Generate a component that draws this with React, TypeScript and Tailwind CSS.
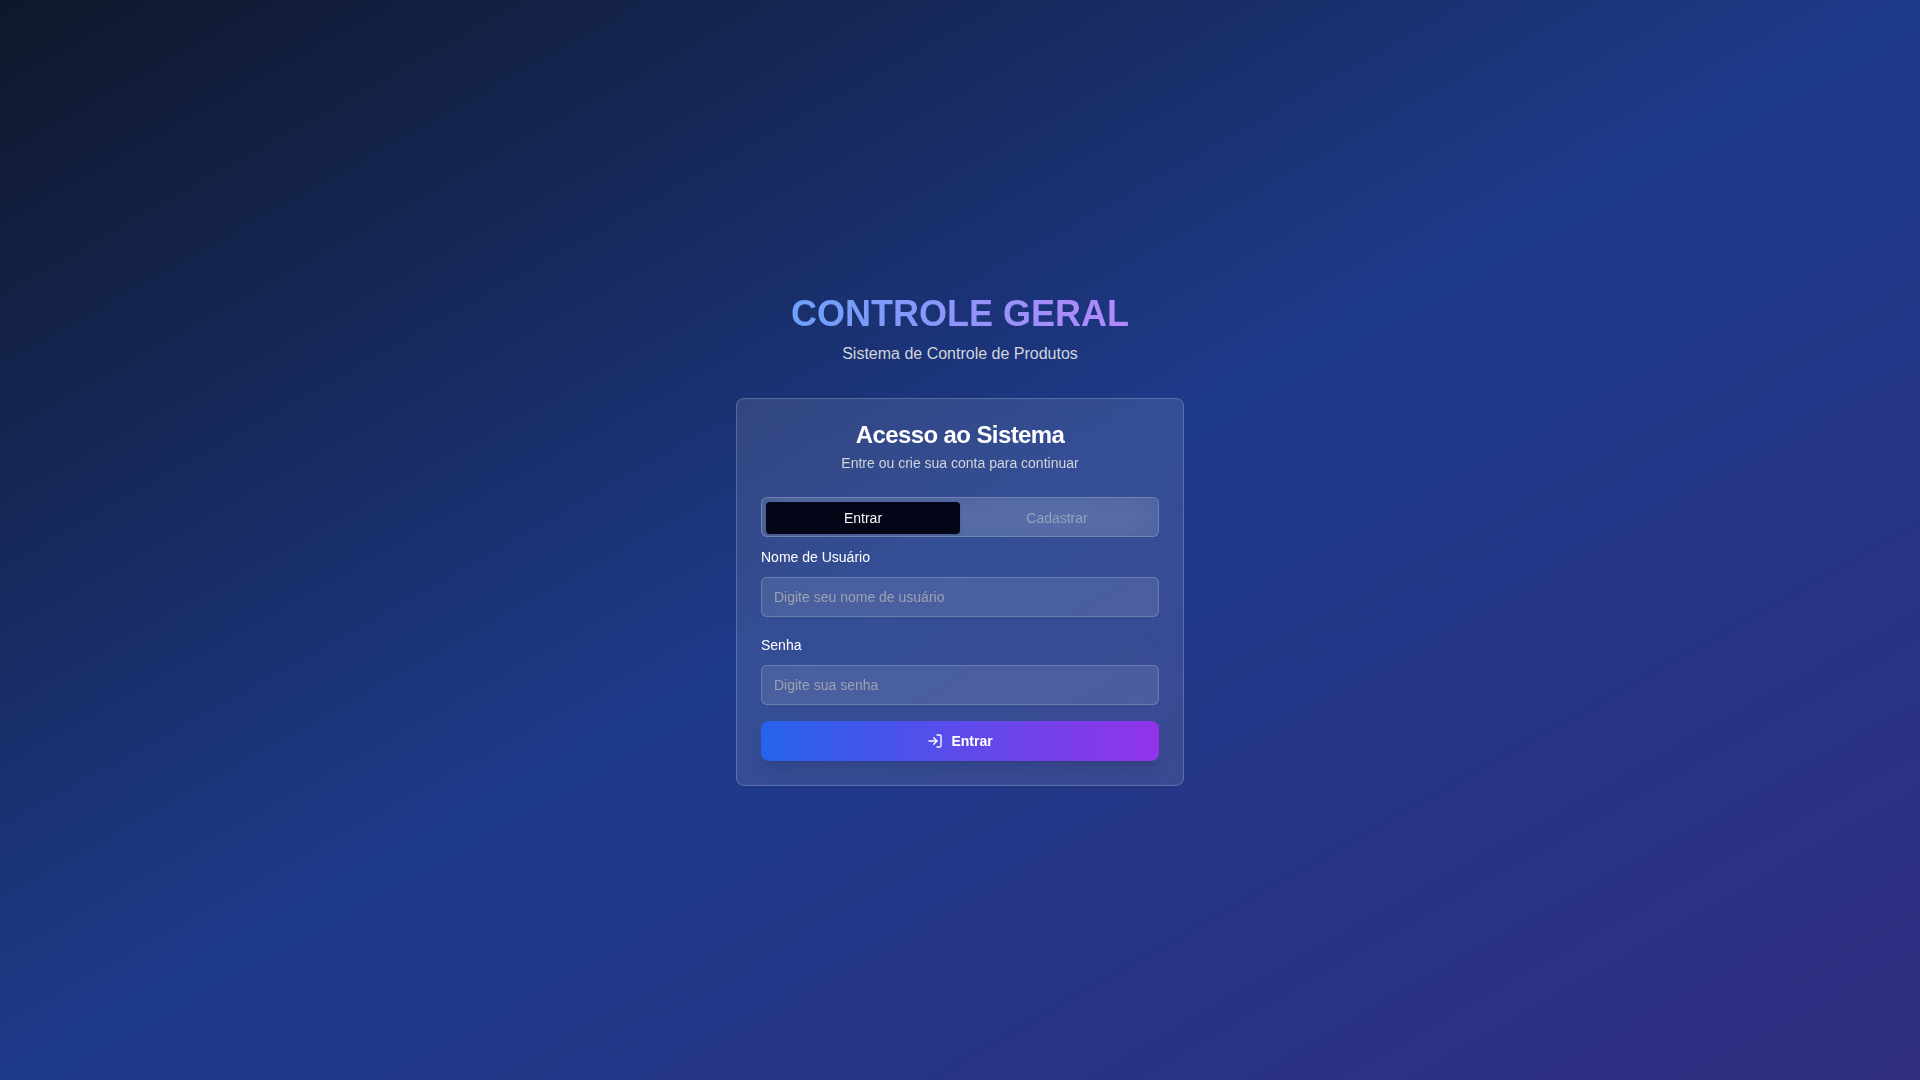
import React, { useState } from 'react';
import { LogIn } from 'lucide-react';

const TABS = [
    { id: 'login', label: 'Entrar' },
    { id: 'register', label: 'Cadastrar' }
];

const FIELDS = [
    { id: 'username', label: 'Nome de Usuário', type: 'text', placeholder: 'Digite seu nome de usuário' },
    { id: 'password', label: 'Senha', type: 'password', placeholder: 'Digite sua senha' }
];

export default function App() {
    const [tab, setTab] = useState('login');

    return (
        <div className="min-h-screen flex items-center justify-center p-4 bg-linear-to-br/srgb from-[#0f172a] via-[#1e3a8a] to-[#312e81] font-['Liberation_Sans',Arial,sans-serif]">
            <main className="w-full max-w-md">
                <div className="text-center mb-8">
                    <h1 className="text-4xl font-bold mb-2 bg-linear-to-r/srgb from-[#60a5fa] to-[#c084fc] bg-clip-text text-transparent">
                        CONTROLE GERAL
                    </h1>
                    <p className="text-[#d1d5db]">Sistema de Controle de Produtos</p>
                </div>

                <div className="rounded-lg border border-white/20 bg-white/10 backdrop-blur-lg shadow-xs">
                    <div className="flex flex-col gap-1.5 p-6 text-center">
                        <h2 className="text-2xl leading-6 font-semibold tracking-tight text-white">Acesso ao Sistema</h2>
                        <p className="text-sm text-[#d1d5db]">Entre ou crie sua conta para continuar</p>
                    </div>

                    <div className="px-6 pb-6">
                        <div role="tablist" className="grid grid-cols-2 h-10 items-center rounded-md border border-white/20 bg-white/10 p-1 backdrop-blur-lg">
                            {TABS.map(item => (
                                <button
                                    key={item.id}
                                    type="button"
                                    role="tab"
                                    aria-selected={tab === item.id}
                                    onClick={() => setTab(item.id)}
                                    className={`rounded-sm px-3 py-1.5 text-sm font-medium ${tab === item.id ? 'bg-[#020617] text-[#f8fafc] shadow-sm' : 'text-[#94a3b8]'}`}
                                >
                                    {item.label}
                                </button>
                            ))}
                        </div>

                        <form className="mt-2 space-y-4" onSubmit={e => e.preventDefault()}>
                            {FIELDS.map(field => (
                                <div key={field.id}>
                                    <label htmlFor={field.id} className="text-sm font-medium text-white">{field.label}</label>
                                    <input
                                        id={field.id}
                                        type={field.type}
                                        placeholder={field.placeholder}
                                        className="mt-2 block w-full h-10 rounded-md border border-white/20 bg-white/10 px-3 py-2 text-sm text-white placeholder:text-[#9ca3af]"
                                    />
                                </div>
                            ))}
                            <button
                                type="submit"
                                className="flex w-full h-10 items-center justify-center gap-2 rounded-lg bg-linear-to-r/srgb from-[#2563eb] to-[#9333ea] px-4 text-sm font-semibold text-white shadow-lg"
                            >
                                <LogIn className="size-4" />
                                Entrar
                            </button>
                        </form>
                    </div>
                </div>
            </main>
        </div>
    );
}
